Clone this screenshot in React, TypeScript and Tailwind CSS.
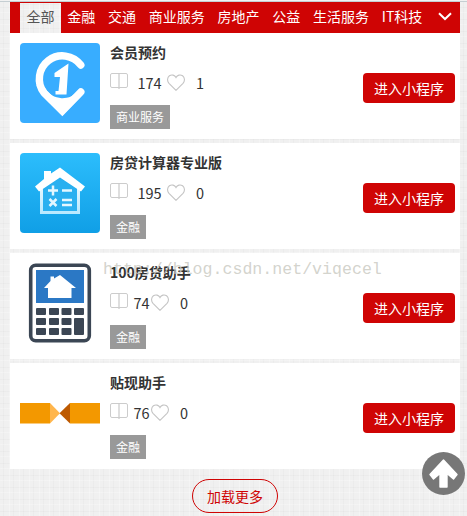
import type { ReactNode } from 'react';

const tabs = ['全部', '金融', '交通', '商业服务', '房地产', '公益', '生活服务', 'IT科技'];

const LocationLogo = () => (
  <svg className="w-20 h-20 rounded" viewBox="0 0 80 80">
    <rect width="80" height="80" fill="#38adff" />
    <path
      d="M60.8 22A23 23 0 1 0 24 49.8L42.3 68L60.8 49"
      fill="none"
      stroke="#fff"
      strokeWidth="7.4"
      strokeLinecap="round"
    />
    <path d="M16.5 42L21.5 51.5L42.3 72.5L63 51.5L59 46.5A20 20 0 0 1 25 45Z" fill="#fff" />
    <path d="M48.5 20.5L34.5 30V34H40L38.5 48H35.5V51.5H46.5Z" fill="#fff" />
  </svg>
);

const HouseLogo = () => (
  <svg className="w-20 h-20 rounded" viewBox="0 0 80 80">
    <defs>
      <linearGradient id="sky" x1="0" y1="0" x2="0" y2="1">
        <stop offset="0" stopColor="#2cbdfc" />
        <stop offset="1" stopColor="#109fe6" />
      </linearGradient>
      <linearGradient id="wall" x1="0" y1="0" x2="0" y2="1">
        <stop offset="0" stopColor="#fff" />
        <stop offset="1" stopColor="#b9e9ff" />
      </linearGradient>
    </defs>
    <rect width="80" height="80" fill="url(#sky)" />
    <path d="M21.5 33V59.5H58.5V33L40 20Z" fill="#2ab0f0" stroke="url(#wall)" strokeWidth="3" />
    <path d="M24 18H31V20.5L40 14.5L65 33.5L61 38.5L40 24.5L19 38.5L15 33.5L24 26Z" fill="#fff" />
    <path
      d="M28 37.5H38M33 32.5V42.5M42 37.5H52M29.5 46L36.5 53M36.5 46L29.5 53M42 47H52M42 52H52"
      stroke="#e4f7ff"
      strokeWidth="2.5"
    />
  </svg>
);

const CalculatorLogo = () => (
  <svg className="w-20 h-20" viewBox="0 0 80 80">
    <rect x="10.7" y="2.2" width="58.6" height="75.6" rx="5" fill="#fff" stroke="#3b4654" strokeWidth="3.6" />
    <rect x="16" y="7" width="48" height="33" fill="#2b78c5" />
    <path d="M30.5 18V13.5H34V15.5L40 12L56 25H51.5V35H28V25H24Z" fill="#fff" />
    <g fill="#3b4654">
      {[45, 55, 65].map((y) =>
        [16, 29, 41.5].map((x) => <rect key={`${x}-${y}`} x={x} y={y} width="10" height="7" rx="1" />)
      )}
      <rect x="54" y="45" width="10" height="7" rx="1" />
      <rect x="54" y="55" width="10" height="17" rx="1" />
    </g>
  </svg>
);

const RibbonLogo = () => (
  <svg className="w-20 h-20" viewBox="0 0 80 80">
    <path d="M0 30H30V50.5H0ZM50 30H80V50.5H50Z" fill="#f39800" />
    <path d="M30 30L40 40.2L30 50.5Z" fill="#ffb64d" />
    <path d="M50 30L39.5 40.2L50 50.5Z" fill="#bd5900" />
  </svg>
);

type App = {
  name: string;
  views: number;
  likes: number;
  category: string;
  logo: ReactNode;
};

const apps: App[] = [
  { name: '会员预约', views: 174, likes: 1, category: '商业服务', logo: <LocationLogo /> },
  { name: '房贷计算器专业版', views: 195, likes: 0, category: '金融', logo: <HouseLogo /> },
  { name: '100房贷助手', views: 74, likes: 0, category: '金融', logo: <CalculatorLogo /> },
  { name: '贴现助手', views: 76, likes: 0, category: '金融', logo: <RibbonLogo /> }
];

const BookIcon = () => (
  <svg className="w-[18px] h-[18px] shrink-0" viewBox="0 0 18 18" fill="none" stroke="#ccc">
    <rect x="0.5" y="0.5" width="17" height="14" rx="1.5" />
    <path d="M9 0.5V16" strokeWidth="1.3" />
  </svg>
);

const HeartIcon = () => (
  <svg className="w-[18px] h-[18px] shrink-0" viewBox="0 0 18 18" fill="none" stroke="#c4c4c4" strokeWidth="1.1">
    <path d="M9 17.3L2 10.3C-0.2 7.8 0.3 4.4 2.4 2.8C4.8 1.2 7.7 2 9 4.6C10.3 2 13.2 1.2 15.6 2.8C17.7 4.4 18.2 7.8 16 10.3Z" />
  </svg>
);

function AppCard({ app }: { app: App }) {
  return (
    <div className="flex h-[106px] pt-2.5 pl-2.5 pr-[5px] bg-white">
      {app.logo}
      <div className="ml-2.5 flex-1">
        <h3 className="h-5 leading-[18px] text-[14px] font-bold text-[#333] whitespace-nowrap">{app.name}</h3>
        <div className="mt-2.5 flex h-[18px] text-[14.5px] leading-5 text-[#333]">
          <BookIcon />
          <span className={app.views > 99 ? 'w-[39px] pl-[9.5px]' : 'w-[23px] pl-[5.5px]'}>{app.views}</span>
          <HeartIcon />
          <span className="pl-[11px]">{app.likes}</span>
        </div>
        <span className="mt-3.5 inline-block h-6 px-1.5 leading-[23px] text-[12px] text-white bg-[#999] align-top">
          {app.category}
        </span>
      </div>
      <button className="mt-[30px] h-[30px] w-[92px] rounded text-[14px] leading-[30px] text-white bg-[#cf0404]">
        进入小程序
      </button>
    </div>
  );
}

const linen =
  'bg-[#f0f0f0] bg-[repeating-linear-gradient(90deg,#0000_0_3px,#00000005_3px_4px,#0000_4px_9px,#ffffff40_9px_10px),repeating-linear-gradient(0deg,#0000_0_4px,#00000005_4px_5px,#0000_5px_11px,#ffffff40_11px_12px)]';

export default function AppList() {
  return (
    <div className={`relative h-[516px] overflow-hidden font-['Noto_Sans_CJK_SC',sans-serif] ${linen}`}>
      <div className="h-0.5 bg-[#f2f2f2] border-b border-[#c5ced2]" />
      <div className="w-[450px] ml-2.5">
        {/* Category tabs */}
        <nav className="flex h-[31px] pl-2.5 bg-[#cf0404] text-[14px] leading-[29px] text-white whitespace-nowrap">
          {tabs.map((tab, i) => (
            <span key={tab} className={`px-[6.4px] ${i === 0 ? `mt-px leading-[27px] text-[#555] ${linen}` : ''}`}>
              {tab}
            </span>
          ))}
          <svg className="ml-auto mr-2 mt-[10px] w-[14px] h-[9px]" viewBox="0 0 14 9" fill="none" stroke="#fff" strokeWidth="2">
            <path d="M1 1.2L7 7L13 1.2" />
          </svg>
        </nav>

        <div className="flex flex-col gap-1">
          {apps.map((app) => (
            <AppCard key={app.name} app={app} />
          ))}
        </div>

        <button className="block mx-auto mt-2.5 w-[86px] h-[34px] rounded-full border border-[#cf0404] text-[14px] text-[#cf0404]">
          加载更多
        </button>
      </div>

      <span className="absolute left-[103px] top-[260px] leading-5 text-[16.6px] text-[#c8c8c0]/80 font-['Liberation_Mono',monospace] whitespace-nowrap pointer-events-none">
        http://blog.csdn.net/viqecel
      </span>

      {/* Back to top */}
      <svg className="absolute left-[422px] top-[452px] w-[43px] h-[43px]" viewBox="0 0 43 43">
        <circle cx="21.5" cy="21.5" r="21.5" fill="#777" />
        <path
          d="M18 35V21.5L11.5 27L8 22.5L21.5 8L35 22.5L31.5 27L25 21.5V35Z"
          fill="#fff"
          stroke="#fff"
          strokeWidth="1.4"
          strokeLinejoin="round"
        />
      </svg>
    </div>
  );
}
